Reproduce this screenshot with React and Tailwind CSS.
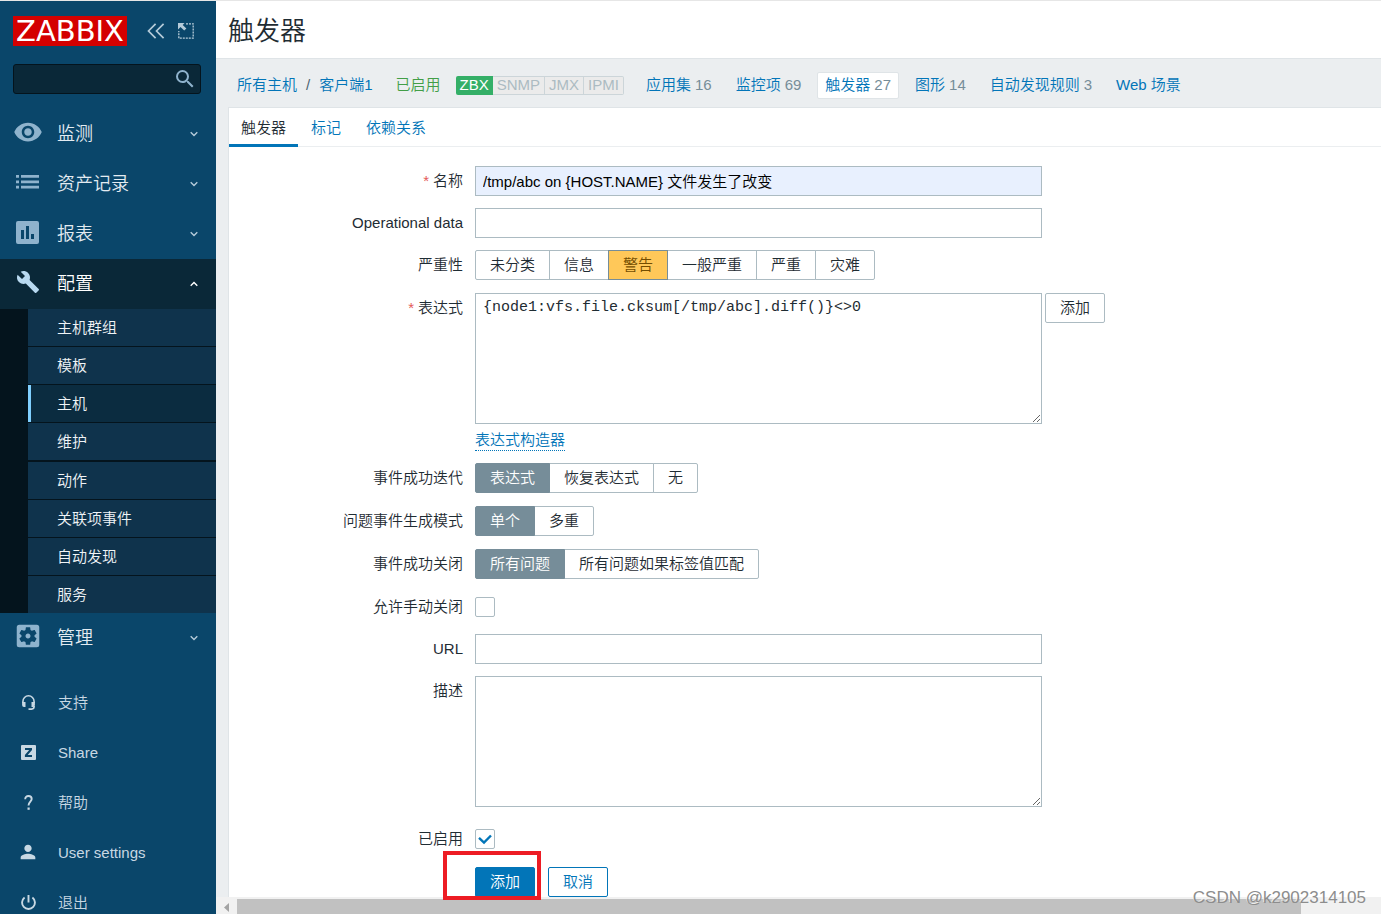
import { useState } from "react";
import {
  MdVisibility,
  MdBuild,
  MdSettingsApplications,
  MdPerson,
  MdSearch,
} from "react-icons/md";

function ListIcon() {
  return (
    <svg width="23" height="14" viewBox="0 0 23 14" fill="currentColor" aria-hidden="true">
      <path d="M0 0h3v2.800H0zM5 0h18v2.800H5zM0 5.400h3v2.800H0zM5 5.400h18v2.800H5zM0 10.800h3v2.800H0zM5 10.800h18v2.800H5z" />
    </svg>
  );
}

function ReportIcon() {
  return (
    <svg width="23" height="23" viewBox="0 0 23 23" fill="currentColor" fillRule="evenodd" aria-hidden="true">
      <path d="M2 0h19a2 2 0 0 1 2 2v19a2 2 0 0 1-2 2H2a2 2 0 0 1-2-2V2a2 2 0 0 1 2-2zM5 9v9h3V9zM10 5v13h3V5zM15 13v5h3v-5z" />
    </svg>
  );
}

function Chevron({ up }) {
  return (
    <svg
      className={up ? "" : "text-[#b5cbd9]"}
      width="8"
      height="6"
      viewBox="0 0 8 6"
      fill="none"
      stroke="currentColor"
      strokeWidth="1.400"
      aria-hidden="true"
    >
      <path d={up ? "M.7 4.800 4 1.500 7.300 4.800" : "M.7 1.200 4 4.500 7.300 1.200"} />
    </svg>
  );
}

function HeadsetIcon() {
  return (
    <svg width="15" height="15" viewBox="0 0 15 15" fill="none" aria-hidden="true">
      <path d="M1.900 8V6.400a5.600 5.600 0 0 1 11.200 0V8" stroke="currentColor" strokeWidth="1.600" />
      <path d="M1.100 7h3.400v5H3a1.900 1.900 0 0 1-1.900-1.900zM10.500 7h3.400v3.100A1.900 1.900 0 0 1 12 12h-1.500z" fill="currentColor" />
      <path d="M13.100 11v.6a2.500 2.500 0 0 1-2.500 2.500H7.500" stroke="currentColor" strokeWidth="1.600" />
    </svg>
  );
}

function ShareIcon() {
  return (
    <svg width="15" height="15" viewBox="0 0 15 15" aria-hidden="true">
      <rect width="15" height="15" rx="1" fill="currentColor" />
      <path d="M4 3h7v1.900L6.700 10.100H11V12H3.900v-1.900L8.200 4.900H4z" fill="#0a466a" />
    </svg>
  );
}

function HelpIcon() {
  return (
    <svg width="15" height="15" viewBox="0 0 15 15" fill="none" aria-hidden="true">
      <path d="M4.200 4.300C4.200 2.200 5.500 1 7.400 1s3.300 1.200 3.300 3c0 2.500-3.200 2.800-3.200 6.500" stroke="currentColor" strokeWidth="1.900" />
      <rect x="6.500" y="12.500" width="2.200" height="2.300" fill="currentColor" />
    </svg>
  );
}

function PowerIcon() {
  return (
    <svg width="15" height="15" viewBox="0 0 15 15" fill="none" stroke="currentColor" strokeWidth="1.900" aria-hidden="true">
      <path d="M7.500 0v7.500M3.600 2.500a6.400 6.400 0 1 0 7.800 0" />
    </svg>
  );
}

function CollapseIcon() {
  return (
    <svg width="18" height="16" viewBox="0 0 18 16" fill="none" stroke="currentColor" strokeWidth="1.700" aria-hidden="true">
      <path d="M8.600.8 1.500 8l7.100 7.200M16.600.8 9.500 8l7.100 7.200" />
    </svg>
  );
}

function HideIcon() {
  return (
    <svg width="16" height="16" viewBox="0 0 16 16" fill="none" aria-hidden="true">
      <path d="M8 .8h7.200v14.400H.8V8" stroke="currentColor" strokeWidth="1.300" strokeDasharray="2 1" />
      <path d="M0 0h6.500L4.700 1.900 8.400 5.600 6.200 7.400 2.500 3.900 0 6.500z" fill="currentColor" />
    </svg>
  );
}

const mainMenu = [
  { label: "监测", icon: <MdVisibility size={30} /> },
  { label: "资产记录", icon: <ListIcon /> },
  { label: "报表", icon: <ReportIcon /> },
  { label: "配置", icon: <MdBuild size={24} />, open: true },
];

const subMenu = ["主机群组", "模板", "主机", "维护", "动作", "关联项事件", "自动发现", "服务"];

const userMenu = [
  { label: "支持", icon: <HeadsetIcon /> },
  { label: "Share", icon: <ShareIcon /> },
  { label: "帮助", icon: <HelpIcon /> },
  { label: "User settings", icon: <MdPerson size={22} /> },
  { label: "退出", icon: <PowerIcon /> },
];

function MenuButton({ item }) {
  return (
    <button
      type="button"
      aria-expanded={!!item.open}
      className={`flex h-[50px] w-full items-center pr-[18px] pl-3 text-left text-[18px] ${
        item.open ? "bg-[#0a2838] text-white" : "text-[#e3ebf1]"
      }`}
    >
      <span className={`flex w-[31px] justify-center pb-1 ${item.open ? "text-[#b8d9f0]" : "text-[#8fb3cd]"}`}>{item.icon}</span>
      <span className="ml-[14px] flex-1 leading-6">{item.label}</span>
      <Chevron up={item.open} />
    </button>
  );
}

function Sidebar() {
  return (
    <aside className="sticky top-0 flex h-[calc(100vh-1px)] w-[216px] shrink-0 flex-col overflow-hidden bg-[#0a466a]">
      <div className="flex h-[63px] shrink-0 items-center pb-[3px] pl-[13px] text-[#b5cbd9]">
        <a href="#home" className="flex h-[30px] w-[114px] items-center justify-center bg-[#d40000] font-['DejaVu_Sans',sans-serif] text-[29px] leading-none font-normal text-white">
          ZABBIX
        </a>
        <button type="button" aria-label="Collapse sidebar" className="ml-5">
          <CollapseIcon />
        </button>
        <button type="button" aria-label="Hide sidebar" className="ml-[13px]">
          <HideIcon />
        </button>
      </div>
      <form role="search" className="mr-[15px] ml-[13px] flex h-[30px] shrink-0 items-center rounded-[3px] border border-[#04141d] bg-[#0a2838]">
        <input aria-label="Search" className="min-w-0 flex-1 bg-transparent px-2 text-[15px] text-white outline-none" />
        <button type="button" aria-label="Run search" className="mr-[3px] text-[#8fb3cd]">
          <MdSearch size={24} />
        </button>
      </form>
      <nav className="mt-[15px] shrink-0">
        {mainMenu.map((m) => (
          <MenuButton key={m.label} item={m} />
        ))}
        <ul className="bg-[#04141d] pl-7 text-[15px] text-[#f0f4f7]">
          {subMenu.map((s, i) => (
            <li
              key={s}
              className={i === 3 ? "border-b-2 border-[#04141d]" : i === 7 ? "" : "border-b border-[#04141d]"}
            >
              <a
                href="#section"
                className={`flex h-[37px] items-center border-l-[3px] pt-0.5 pl-[26px] ${
                  i === 2 ? "border-[#80d0ff] bg-[#0b2c40]" : "border-[#0f334c] bg-[#0f334c]"
                }`}
              >
                {s}
              </a>
            </li>
          ))}
        </ul>
        <MenuButton item={{ label: "管理", icon: <MdSettingsApplications size={30} /> }} />
      </nav>
      <ul className="mt-[15px] shrink-0 text-[15px] text-[#c8d8e3]">
        {userMenu.map((u) => (
          <li key={u.label}>
            <a href="#user" className="flex h-[50px] items-center pl-4">
              <span className="flex w-6 justify-center pb-0.5">{u.icon}</span>
              <span className="ml-[18px]">{u.label}</span>
            </a>
          </li>
        ))}
      </ul>
    </aside>
  );
}

const hostLinks = [
  ["应用集", "16"],
  ["监控项", "69"],
  ["触发器", "27"],
  ["图形", "14"],
  ["自动发现规则", "3"],
  ["Web 场景", ""],
];

function HostNav() {
  return (
    <nav className="flex h-12 items-center pt-[5px] pl-[21px] whitespace-nowrap text-[#0275b8]">
      <a href="#hosts">所有主机</a>
      <span className="px-[9px] text-[#4b6472]">/</span>
      <a href="#host">客户端1</a>
      <span className="ml-[23px] text-[#429e47]">已启用</span>
      <ul className="ml-[15px] flex h-[19px] items-center text-[#acbbc2]">
        <li className="flex h-full items-center rounded-l-[2px] bg-[#34af67] px-1 text-white">ZBX</li>
        {["SNMP", "JMX", "IPMI"].map((t) => (
          <li key={t} className="flex h-full items-center border border-l-0 border-[#ccd5d9] bg-[#ebebeb] px-1 last:rounded-r-[2px]">
            {t}
          </li>
        ))}
      </ul>
      <ul className="ml-[14px] flex gap-2">
        {hostLinks.map(([name, count], i) => (
          <li key={name}>
            <a
              href="#list"
              className={`flex h-[27px] items-center gap-1 rounded-[2px] border px-[7px] ${
                i === 2 ? "border-[#dfe4e7] bg-white" : "border-transparent"
              }`}
            >
              {name}
              {count && <span className="text-[#768d99]">{count}</span>}
            </a>
          </li>
        ))}
      </ul>
    </nav>
  );
}

function Row({ label, htmlFor, required, className = "", children }) {
  return (
    <div className={`grid grid-cols-[234px_minmax(0,1fr)] gap-3 ${className}`}>
      <label htmlFor={htmlFor} className="text-right leading-[30px]">
        {required && <span className="mr-1 text-[#e45959]">*</span>}
        {label}
      </label>
      <div>{children}</div>
    </div>
  );
}

function Segmented({ name, options, initial, warn }) {
  const [value, setValue] = useState(initial);
  return (
    <div role="radiogroup" aria-label={name} className="flex h-[31px] items-start">
      {options.map((o, i) => {
        const on = o === value;
        const tone = !on
          ? "border-[#acbbc2] bg-white"
          : warn
            ? "z-10 border-[#768d99] bg-[#ffc859] text-[#734d00]"
            : "z-10 border-[#768d99] bg-[#768d99] text-white";
        return (
          <label
            key={o}
            className={`relative -ml-px flex h-[30px] items-center border px-[14px] whitespace-nowrap first:ml-0 first:rounded-l-[2px] last:rounded-r-[2px] ${tone}`}
          >
            <input
              type="radio"
              id={i === 0 ? name : undefined}
              name={name}
              checked={on}
              onChange={() => setValue(o)}
              className="sr-only"
            />
            {o}
          </label>
        );
      })}
    </div>
  );
}

function Checkbox({ id, defaultChecked }) {
  return (
    <span className="relative flex h-[30px] w-5 items-center">
      <input
        id={id}
        type="checkbox"
        defaultChecked={defaultChecked}
        className="peer size-5 appearance-none rounded-[2px] border border-[#acbbc2] bg-white"
      />
      <svg
        className="pointer-events-none absolute left-[3px] hidden peer-checked:block"
        width="14"
        height="12"
        viewBox="0 0 14 12"
        fill="none"
        stroke="#0275b8"
        strokeWidth="2.400"
        aria-hidden="true"
      >
        <path d="M1 4.800 6 9.500 13 2.500" />
      </svg>
    </span>
  );
}

const field = "block w-full max-w-[567px] border border-[#acbbc2] px-[7px] text-[15px] outline-none";

function TriggerForm() {
  return (
    <form className="flex flex-col gap-3 pt-[19px]" onSubmit={(e) => e.preventDefault()}>
      <Row label="名称" htmlFor="name" required>
        <input id="name" defaultValue="/tmp/abc on {HOST.NAME} 文件发生了改变" className={`${field} h-[30px] bg-[#e8f0fe] pb-0.5 text-black`} />
      </Row>
      <Row label="Operational data" htmlFor="opdata">
        <input id="opdata" className={`${field} h-[30px] bg-white`} />
      </Row>
      <Row label="严重性" htmlFor="severity">
        <Segmented name="severity" options={["未分类", "信息", "警告", "一般严重", "严重", "灾难"]} initial="警告" warn />
      </Row>
      <Row label="表达式" htmlFor="expression" required>
        <div className="flex items-start gap-[3px]">
          <textarea
            id="expression"
            defaultValue="{node1:vfs.file.cksum[/tmp/abc].diff()}<>0"
            className={`${field} h-[131px] bg-white py-[5px] font-['Liberation_Mono',monospace] leading-[18px]`}
          />
          <button type="button" className="h-[30px] shrink-0 rounded-[2px] border border-[#acbbc2] bg-white px-[14px]">
            添加
          </button>
        </div>
        <div className="mt-[5px] flex">
          <a href="#constructor" className="border-b border-dotted border-[#0275b8] leading-[21px] text-[#0275b8]">
            表达式构造器
          </a>
        </div>
      </Row>
      <Row label="事件成功迭代" htmlFor="recovery">
        <Segmented name="recovery" options={["表达式", "恢复表达式", "无"]} initial="表达式" />
      </Row>
      <Row label="问题事件生成模式" htmlFor="mode">
        <Segmented name="mode" options={["单个", "多重"]} initial="单个" />
      </Row>
      <Row label="事件成功关闭" htmlFor="closes">
        <Segmented name="closes" options={["所有问题", "所有问题如果标签值匹配"]} initial="所有问题" />
      </Row>
      <Row label="允许手动关闭" htmlFor="manual">
        <Checkbox id="manual" />
      </Row>
      <Row label="URL" htmlFor="url">
        <input id="url" className={`${field} h-[30px] bg-white`} />
      </Row>
      <Row label="描述" htmlFor="description">
        <textarea id="description" className={`${field} h-[131px] bg-white py-[5px]`} />
      </Row>
      <Row label="已启用" htmlFor="enabled" className="pt-[5px]">
        <Checkbox id="enabled" defaultChecked />
      </Row>
      <div className="relative flex gap-[13px] pt-px pl-[246px]">
        <button type="submit" className="h-[30px] rounded-[2px] border border-[#0275b8] bg-[#0275b8] px-[14px] text-white">
          添加
        </button>
        <button type="button" className="h-[30px] rounded-[2px] border border-[#0275b8] bg-white px-[14px] text-[#0275b8]">
          取消
        </button>
        <div className="pointer-events-none absolute -top-[15px] left-[214px] z-20 h-[49px] w-[98px] border-4 border-[#ed1c24]" />
      </div>
    </form>
  );
}

export default function App() {
  return (
    <div className="relative flex min-h-screen border-t border-[#e6e6e6] bg-[#ebeef0] font-['Liberation_Sans','Noto_Sans_CJK_SC',sans-serif] text-[15px] font-[350] text-[#1f2c33]">
      <Sidebar />
      <main className="flex min-w-0 flex-1 flex-col">
        <header className="flex h-[58px] items-center border-b border-[#dfe4e7] bg-white pt-0.5 pl-3">
          <h1 className="text-[26px] leading-8 font-[350]">触发器</h1>
        </header>
        <HostNav />
        <section className="ml-3 flex-1 border-t border-l border-[#dfe4e7] bg-white">
          <div role="tablist" className="flex h-[39px] gap-px border-b border-[#ebeef0] text-[#0275b8]">
            <button type="button" role="tab" aria-selected="true" className="-mb-px border-b-[3px] border-[#0275b8] px-3 pt-1 text-[#1f2c33]">
              触发器
            </button>
            <button type="button" role="tab" aria-selected="false" className="px-3 pt-0.5">
              标记
            </button>
            <button type="button" role="tab" aria-selected="false" className="px-3 pt-0.5">
              依赖关系
            </button>
          </div>
          <TriggerForm />
        </section>
        <div className="flex h-[17px] items-end bg-[#f1f1f1] pr-20" aria-hidden="true">
          <div className="flex h-full w-[21px] shrink-0 items-center justify-center pt-1">
            <svg width="5" height="9" viewBox="0 0 5 9" fill="#a3a3a3">
              <path d="M5 0v9L0 4.500z" />
            </svg>
          </div>
          <div className="h-[15px] flex-1 bg-[#c1c1c1]" />
        </div>
      </main>
      <div className="pointer-events-none absolute right-[15px] bottom-[6px] text-[17px] leading-5 text-[#8d8d8d] [text-shadow:-1px_-1px_0_#ffffffb0]">
        CSDN @k2902314105
      </div>
    </div>
  );
}
